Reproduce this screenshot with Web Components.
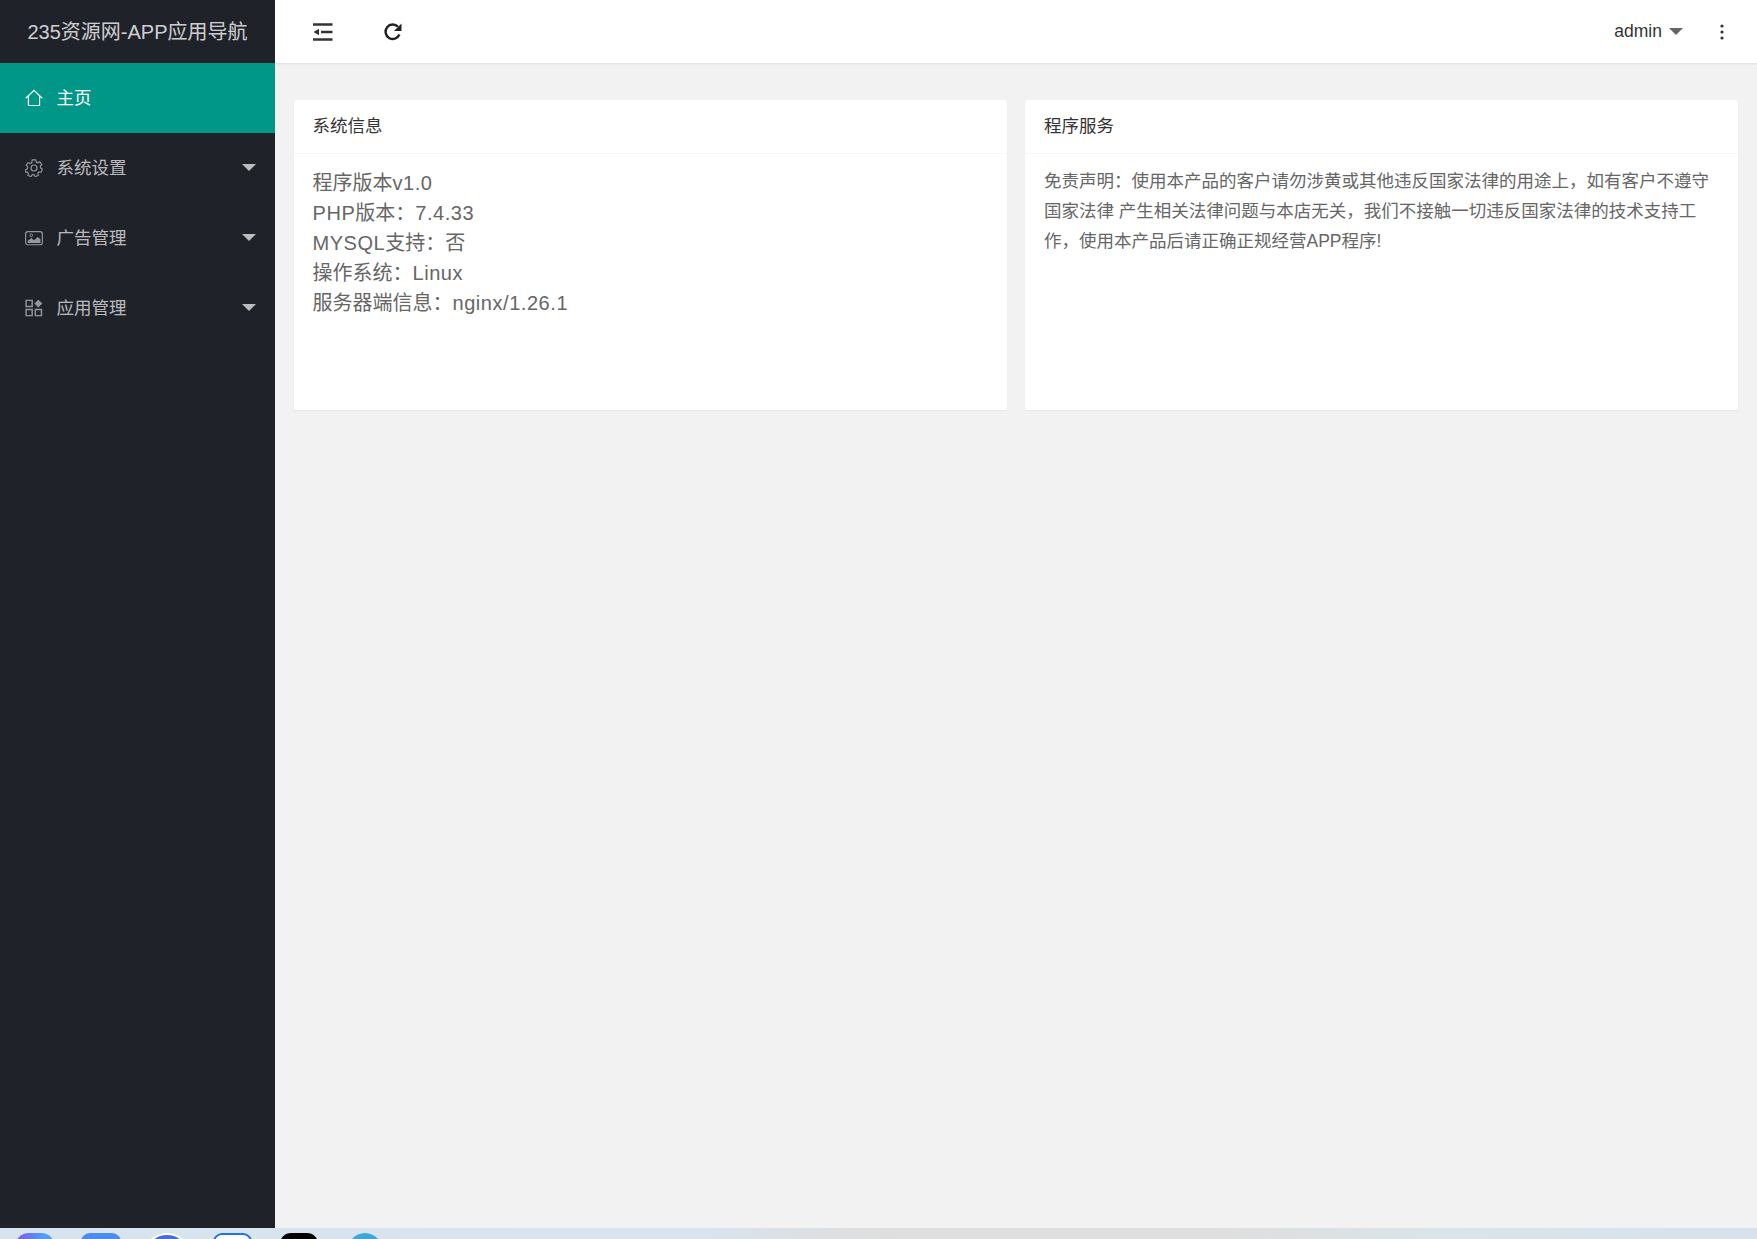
<!DOCTYPE html>
<html lang="zh">
<head>
<meta charset="utf-8">
<title>235资源网-APP应用导航</title>
<style>
html, body { margin: 0; height: 100%; }
body {
  font-family: "Liberation Sans", "Noto Sans CJK SC", sans-serif;
  background: #f2f2f2;
  overflow: hidden;
}
</style>
</head>
<body>
<admin-app>
  <side-nav slot="side" brand="235资源网-APP应用导航">
    <nav-item icon="home" active>主页</nav-item>
    <nav-item icon="gear" more>系统设置</nav-item>
    <nav-item icon="image" more>广告管理</nav-item>
    <nav-item icon="apps" more>应用管理</nav-item>
  </side-nav>
  <top-bar slot="top" user="admin"></top-bar>
  <info-card title="系统信息" tone="large">
    <div>程序版本<lat-text>v1.0</lat-text></div>
    <div><lat-text>PHP</lat-text>版本&#xFF1A;<lat-text>7.4.33</lat-text></div>
    <div><lat-text>MYSQL</lat-text>支持&#xFF1A;否</div>
    <div>操作系统&#xFF1A;<lat-text>Linux</lat-text></div>
    <div>服务器端信息&#xFF1A;<lat-text>nginx/1.26.1</lat-text></div>
  </info-card>
  <info-card title="程序服务">
    免责声明&#xFF1A;使用本产品的客户请勿涉黄或其他违反国家法律的用途上&#xFF0C;如有客户不遵守国家法律 产生相关法律问题与本店无关&#xFF0C;我们不接触一切违反国家法律的技术支持工作&#xFF0C;使用本产品后请正确正规经营APP程序!
  </info-card>
  <dock-strip slot="dock"></dock-strip>
</admin-app>

<script>
const ICONS = {
  home: '<path d="M.8 10.300 10 1.500l9.200 8.800M3.800 8V18.300h12.400V8" fill="none" stroke="currentColor" stroke-width="1.300"/>',
  gear: '<circle cx="10" cy="10" r="3.300" fill="none" stroke="currentColor" stroke-width="1.300"/><path d="M8 1h4l.5 2.500 1.700.8 2.300-1.200 2.200 3-1.700 1.900.3 1.900 2 1.200-1.200 3.500-2.500-.2-1.300 1.400.5 2.500-3.600 1.200-1.300-2.200h-1.800l-1.300 2.200-3.600-1.200.5-2.500-1.300-1.400-2.500.2L.7 11.900l2-1.200.3-1.900-1.700-1.900 2.200-3 2.300 1.200 1.700-.8z" fill="none" stroke="currentColor" stroke-width="1.300" stroke-linejoin="round"/>',
  image: '<rect x=".7" y="3" width="18.600" height="14.500" rx="2.500" fill="none" stroke="currentColor" stroke-width="1.300"/><path d="M3 15.500v-2.200l4-3.300 3 2.400 4.200-3.600 3 2.600v4.100z" fill="currentColor"/><circle cx="7" cy="7" r="1.500" fill="none" stroke="currentColor"/>',
  apps: '<path d="M1.200 1.500h6.800v6.800H1.200zM1.200 11.700h6.800v6.800H1.200zM11.500 11.700h6.800v6.800h-6.800z" fill="none" stroke="currentColor" stroke-width="1.600"/><path d="M14.800.8 19.200 5.100 14.800 9.400 10.400 5.100z" fill="currentColor"/>'
};

class AdminApp extends HTMLElement {
  constructor() {
    super();
    this.attachShadow({ mode: 'open' });
    this.shadowRoot.innerHTML = `
      <style>
        :host { display: grid; grid-template-rows: 1228px 11px; height: 1239px; }
        .frame { display: grid; grid-template-columns: 275px 1fr; min-height: 0; }
        .main { display: flex; flex-direction: column; min-width: 0; }
        .content {
          display: grid;
          grid-template-columns: 1fr 1fr;
          gap: 18px;
          padding: 37px 19px 0;
          align-items: start;
        }
      </style>
      <div class="frame">
        <slot name="side"></slot>
        <div class="main">
          <slot name="top"></slot>
          <div class="content"><slot></slot></div>
        </div>
      </div>
      <slot name="dock"></slot>`;
  }
}

class SideNav extends HTMLElement {
  constructor() {
    super();
    this.attachShadow({ mode: 'open' });
    this.shadowRoot.innerHTML = `
      <style>
        :host { display: block; background: #20222a; }
        .brand {
          height: 63px;
          line-height: 65px;
          text-align: center;
          font-size: 20px;
          color: rgba(255,255,255,.8);
          white-space: nowrap;
        }
      </style>
      <div class="brand"></div>
      <slot></slot>`;
  }
  connectedCallback() {
    this.shadowRoot.querySelector('.brand').textContent = this.getAttribute('brand');
  }
}

class NavItem extends HTMLElement {
  constructor() {
    super();
    this.attachShadow({ mode: 'open' });
    this.shadowRoot.innerHTML = `
      <style>
        :host {
          display: flex;
          align-items: center;
          height: 70px;
          padding-left: 25px;
          font-size: 17.5px;
          color: rgba(255,255,255,.7);
        }
        :host([active]) { background: #009688; color: #fff; }
        svg { width: 18px; height: 18px; margin-right: 13.5px; flex: none; }
        :host(:not([active])) svg { opacity: .75; }
        .label { flex: 1; white-space: nowrap; position: relative; top: -2px; }
        .caret {
          width: 0; height: 0;
          margin-right: 19px;
          position: relative;
          top: -1px;
          border: 7px solid transparent;
          border-top-color: rgba(255,255,255,.7);
          border-bottom: 0;
        }
      </style>
      <svg viewBox="0 0 20 20"></svg>
      <span class="label"><slot></slot></span>`;
  }
  connectedCallback() {
    this.shadowRoot.querySelector('svg').innerHTML = ICONS[this.getAttribute('icon')] || '';
    if (this.hasAttribute('more') && !this.shadowRoot.querySelector('.caret')) {
      const c = document.createElement('span');
      c.className = 'caret';
      this.shadowRoot.append(c);
    }
  }
}

class TopBar extends HTMLElement {
  constructor() {
    super();
    this.attachShadow({ mode: 'open' });
    this.shadowRoot.innerHTML = `
      <style>
        :host {
          display: flex;
          align-items: center;
          height: 63px;
          background: #fff;
          box-shadow: 0 1px 2px rgba(0,0,0,.08);
          color: #333;
          font-size: 17.5px;
          position: relative;
        }
        .tool { display: flex; }
        .fold { margin-left: 38px; }
        .refresh { margin-left: 50px; }
        .user { margin-left: auto; display: flex; align-items: center; color: #333; }
        .caret {
          width: 0; height: 0;
          margin-left: 7px;
          border: 7px solid transparent;
          border-top-color: #666;
          border-bottom: 0;
        }
        .menu { margin: 0 33px 0 37px; }
      </style>
      <span class="tool fold"><svg width="20" height="18" viewBox="0 0 20 18">
        <path d="M0 1.500h19.500M8 9h11.500M0 16.500h19.500" fill="none" stroke="#333" stroke-width="2.600"/>
        <path d="M0.500 9 6 5.800v6.400z" fill="#333"/>
      </svg></span>
      <span class="tool refresh"><svg width="20" height="20" viewBox="0 0 20 20">
        <path d="M16.400 12.500A7.200 7.200 0 1 1 15 4.800" fill="none" stroke="#222" stroke-width="2.400"/>
        <path d="M18.500 1.500v7.500h-7.500z" fill="#222"/>
      </svg></span>
      <span class="user"><span class="name"></span><span class="caret"></span></span>
      <span class="tool menu"><svg width="4" height="16" viewBox="0 0 4 16">
        <circle cx="2" cy="2" r="1.600" fill="#333"/><circle cx="2" cy="8" r="1.600" fill="#333"/><circle cx="2" cy="14" r="1.600" fill="#333"/>
      </svg></span>`;
  }
  connectedCallback() {
    this.shadowRoot.querySelector('.name').textContent = this.getAttribute('user');
  }
}

class InfoCard extends HTMLElement {
  constructor() {
    super();
    this.attachShadow({ mode: 'open' });
    this.shadowRoot.innerHTML = `
      <style>
        :host {
          display: block;
          height: 310px;
          background: #fff;
          border-radius: 3px;
          box-shadow: 0 1px 2px rgba(0,0,0,.05);
          overflow: hidden;
        }
        .head {
          height: 53px;
          line-height: 53px;
          padding: 0 19px;
          border-bottom: 1px solid #f6f6f6;
          font-size: 17.500px;
          color: #333;
        }
        .body {
          padding: 12px 19px;
          font-size: 17.500px;
          line-height: 30px;
          color: #666;
        }
        :host([tone="large"]) .head { padding: 0 18.500px; }
        :host([tone="large"]) .body { font-size: 20px; padding: 13.500px 18.500px; }
      </style>
      <div class="head"></div>
      <div class="body"><slot></slot></div>`;
  }
  connectedCallback() {
    this.shadowRoot.querySelector('.head').textContent = this.getAttribute('title');
  }
}

/* latin runs in the large card come out wider than Liberation's advances */
class LatText extends HTMLElement {
  constructor() {
    super();
    this.attachShadow({ mode: 'open' });
    this.shadowRoot.innerHTML = `<style>:host { display: inline; letter-spacing: .55px; }</style><slot></slot>`;
  }
}

class DockStrip extends HTMLElement {
  constructor() {
    super();
    this.attachShadow({ mode: 'open' });
    this.shadowRoot.innerHTML = `
      <style>
        :host {
          display: block;
          height: 11px;
          overflow: hidden;
          background: linear-gradient(90deg,#d8e4ed 0,#d9e4ee 40%,#dedede 50%,#dfdfdf 70%,#d9e5ea 82%,#d7e2ec 100%);
        }
        .row { display: flex; padding: 5px 0 0 15px; }
        i { display: block; height: 40px; flex: none; box-sizing: border-box; }
        .a { width: 40px; border-radius: 14px; background: linear-gradient(90deg,#8a4ff0,#4aa0fa 70%); }
        .b { width: 40px; margin-left: 26px; border-radius: 9px; background: #4a8cf5; }
        .c { width: 44px; margin-left: 24px; border-radius: 50%; background: #3f6fe8; border: 2px solid #fff; }
        .d { width: 39px; margin-left: 24px; border-radius: 9px; background: #fff; border: 2px solid #1a73e8; }
        .e { width: 38px; margin-left: 28px; border-radius: 11px; background: #000; }
        .f { width: 36px; margin-left: 29px; border-radius: 50%; background: #3aa8dc; }
      </style>
      <div class="row"><i class="a"></i><i class="b"></i><i class="c"></i><i class="d"></i><i class="e"></i><i class="f"></i></div>`;
  }
}

customElements.define('admin-app', AdminApp);
customElements.define('side-nav', SideNav);
customElements.define('nav-item', NavItem);
customElements.define('top-bar', TopBar);
customElements.define('info-card', InfoCard);
customElements.define('lat-text', LatText);
customElements.define('dock-strip', DockStrip);
</script>
</body>
</html>
